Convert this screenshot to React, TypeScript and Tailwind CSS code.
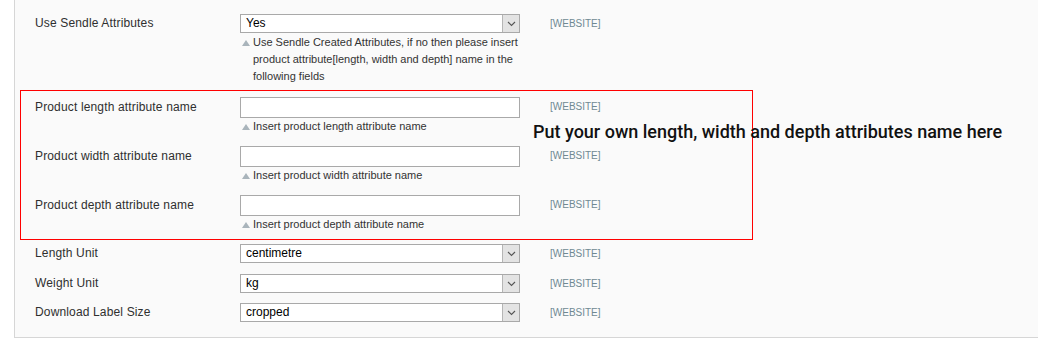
import React from "react";

const Tri = () => (
  <svg width="8" height="6" viewBox="0 0 8 6" className="mt-[6px]">
    <polygon points="4,0 8,6 0,6" fill="#a9b4bb" />
  </svg>
);

const Select = ({ value }: { value: string }) => (
  <div className="flex h-[19px] w-[280px] border border-[#a9a9a9] bg-white">
    <div className="flex-1 pl-[5px] text-[12px] leading-[17px] text-black">{value}</div>
    <div className="flex w-[17px] items-center justify-center border-l border-[#b5b5b5] bg-[#e3e3e3]">
      <svg width="9" height="6" viewBox="0 0 9 6">
        <polyline points="1,1 4.5,4.5 8,1" fill="none" stroke="#555" strokeWidth="1.1" />
      </svg>
    </div>
  </div>
);

const Input = () => <div className="h-[21px] w-[280px] border border-[#a9a9a9] bg-white" />;

const Note = ({ children }: { children: React.ReactNode }) => (
  <div className="flex text-[11px] leading-[17px] text-[#333]">
    <div className="w-[13px] shrink-0 pl-[2px]">
      <Tri />
    </div>
    <div>{children}</div>
  </div>
);

const Scope = () => (
  <div className="ml-[30px] pt-[3px] text-[10px] leading-[13px] text-[#6f8992]">[WEBSITE]</div>
);

const Row = ({
  label,
  field,
  lh,
}: {
  label: string;
  field: React.ReactNode;
  lh: string;
}) => (
  <div className="flex">
    <div className={`w-[205px] shrink-0 text-[12px] tracking-[0.15px] text-[#2f2f2f] ${lh}`}>{label}</div>
    <div className="w-[280px] shrink-0">{field}</div>
    <Scope />
  </div>
);

export default function App() {
  return (
    <div className="relative h-[342px] w-[1038px] overflow-hidden bg-white font-['Liberation_Sans',Arial,sans-serif]">
      <div className="ml-[14px] h-[338px] border-b border-l border-[#d6d6d6] bg-[#fafafa] pt-[14px]">
        <div className="pl-[20px]">
          <Row
            label="Use Sendle Attributes"
            lh="leading-[19px]"
            field={
              <div>
                <Select value="Yes" />
                <div className="mt-[1px]">
                  <Note>
                    Use Sendle Created Attributes, if no then please insert
                    <br />
                    product attribute[length, width and depth] name in the
                    <br />
                    following fields
                  </Note>
                </div>
              </div>
            }
          />
        </div>
        <div className="ml-[5px] mt-[5px] flex w-[733px] flex-col gap-[11px] border border-[#f00] pb-[6px] pl-[14px] pt-[6px]">
          {["length", "width", "depth"].map((k) => (
            <Row
              key={k}
              label={`Product ${k} attribute name`}
              lh="leading-[21px]"
              field={
                <div>
                  <Input />
                  <Note>Insert product {k} attribute name</Note>
                </div>
              }
            />
          ))}
        </div>
        <div className="mt-[4px] flex flex-col pl-[20px]">
          <Row label="Length Unit" lh="leading-[19px]" field={<Select value="centimetre" />} />
          <div className="mt-[11px]">
            <Row label="Weight Unit" lh="leading-[19px]" field={<Select value="kg" />} />
          </div>
          <div className="mt-[10px]">
            <Row label="Download Label Size" lh="leading-[19px]" field={<Select value="cropped" />} />
          </div>
        </div>
      </div>
      <div className="absolute left-[533px] top-[121px] whitespace-nowrap font-['Roboto',sans-serif] text-[18px] font-medium leading-[21px] text-[#111]">
        Put your own length, width and depth attributes name here
      </div>
    </div>
  );
}
